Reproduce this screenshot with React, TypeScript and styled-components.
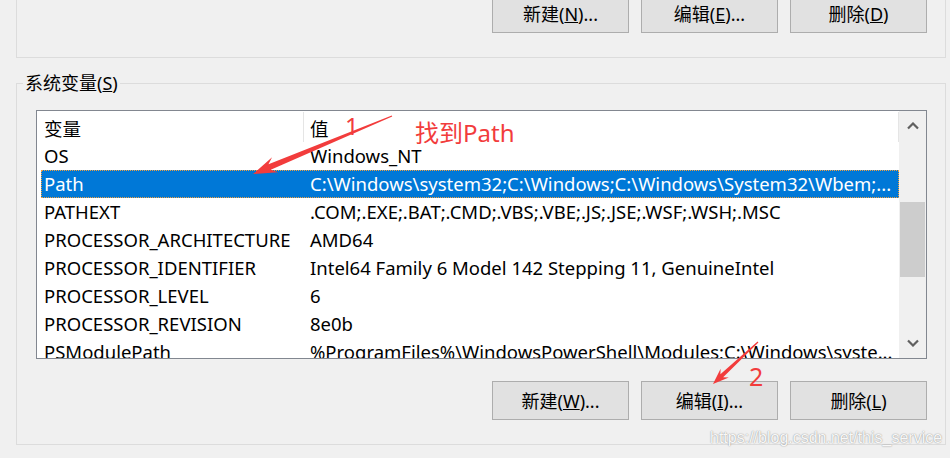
import React from 'react';
import styled, { createGlobalStyle } from 'styled-components';

const UI_FONT = `'Noto Sans', 'Noto Sans CJK SC', sans-serif`;
const MARK_RED = '#f23c3c';

const GlobalStyle = createGlobalStyle`
  html, body {
    margin: 0;
    padding: 0;
    background: #f0f0f0;
  }

  * {
    box-sizing: border-box;
  }
`;

const Page = styled.div`
  position: relative;
  width: 950px;
  height: 458px;
  overflow: hidden;
  display: flex;
  flex-direction: column;
  padding: 0 4px 0 16px;
  background: #f0f0f0;
  font-family: ${UI_FONT};
  font-size: 18px;
  color: #000;
`;

const TopGroup = styled.div`
  height: 58px;
  flex: none;
  display: flex;
  align-items: flex-end;
  justify-content: flex-end;
  padding: 0 18px 24px 0;
  border: 1px solid #dcdcdc;
  border-top: none;
`;

const ButtonRow = styled.div<{ $top?: number }>`
  display: flex;
  justify-content: flex-end;
  gap: 12px;
  margin-top: ${(p) => p.$top ?? 0}px;
`;

const DialogButton = styled.button`
  flex: none;
  width: 137px;
  height: 39px;
  padding: 0;
  background: #e1e1e1;
  border: 1px solid #adadad;
  font: inherit;
  line-height: 1;
  color: #000;
`;

const GroupBox = styled.fieldset`
  margin: 13px 0 0;
  padding: 0;
  min-width: 0;
  border: 1px solid #dcdcdc;
`;

const GroupTitle = styled.legend`
  margin-left: 6px;
  padding: 0 2px;
  line-height: 24px;
`;

const GroupBody = styled.div`
  display: flex;
  flex-direction: column;
  padding: 15px 18px 24px 19px;
`;

const ListBox = styled.div`
  display: flex;
  height: 249px;
  background: #fff;
  border: 1px solid #828790;
  font-size: 18.5px;
`;

const ListArea = styled.div`
  flex: 1;
  min-width: 0;
  overflow: hidden;
  padding-left: 4px;
`;

const HeaderRow = styled.div`
  display: grid;
  grid-template-columns: 263px 1fr;
  height: 31px;
  line-height: 33px;
`;

const HeaderCell = styled.div<{ $first?: boolean }>`
  padding-left: ${(p) => (p.$first ? 3 : 6)}px;
  border-right: 1px solid #e5e5e5;
  height: 30px;
  margin-top: 1px;
  white-space: nowrap;
`;

const Row = styled.div<{ $selected?: boolean }>`
  display: grid;
  grid-template-columns: 263px 1fr;
  height: 28px;
  line-height: 28px;
  background: ${(p) => (p.$selected ? '#0078d7' : 'transparent')};
  color: ${(p) => (p.$selected ? '#fff' : '#000')};
  outline: ${(p) => (p.$selected ? '1px dotted #f0a040' : 'none')};
  outline-offset: -1px;
`;

const Cell = styled.div<{ $first?: boolean }>`
  padding-left: ${(p) => (p.$first ? 3 : 6)}px;
  overflow: hidden;
  white-space: nowrap;
  text-overflow: clip;
`;

const ScrollBar = styled.div`
  flex: none;
  width: 27px;
  display: flex;
  flex-direction: column;
  background: #f0f0f0;
`;

const ScrollArrow = styled.div`
  height: 30px;
  display: flex;
  align-items: center;
  justify-content: center;
`;

const ScrollTrack = styled.div`
  flex: 1;
  padding: 0 1px;
`;

const ScrollThumb = styled.div`
  height: 75px;
  background: #cdcdcd;
`;

const Overlay = styled.svg`
  position: absolute;
  inset: 0;
  pointer-events: none;
`;

const Callout = styled.span<{ $x: number; $y: number; $size: number }>`
  position: absolute;
  left: ${(p) => p.$x}px;
  top: ${(p) => p.$y}px;
  font-size: ${(p) => p.$size}px;
  line-height: 1;
  color: ${MARK_RED};
  white-space: nowrap;
`;

const Watermark = styled.span`
  position: absolute;
  left: 710px;
  top: 429px;
  font-family: 'Liberation Sans', Arial, sans-serif;
  font-size: 16px;
  color: rgba(255, 255, 255, 0.95);
  text-shadow: 0 0 1px rgba(0, 0, 0, 0.35), 0 0 2px rgba(0, 0, 0, 0.2);
  white-space: nowrap;
`;

type Variable = { name: string; value: string };

const variables: Variable[] = [
  { name: 'OS', value: 'Windows_NT' },
  { name: 'Path', value: 'C:\\Windows\\system32;C:\\Windows;C:\\Windows\\System32\\Wbem;...' },
  { name: 'PATHEXT', value: '.COM;.EXE;.BAT;.CMD;.VBS;.VBE;.JS;.JSE;.WSF;.WSH;.MSC' },
  { name: 'PROCESSOR_ARCHITECTURE', value: 'AMD64' },
  { name: 'PROCESSOR_IDENTIFIER', value: 'Intel64 Family 6 Model 142 Stepping 11, GenuineIntel' },
  { name: 'PROCESSOR_LEVEL', value: '6' },
  { name: 'PROCESSOR_REVISION', value: '8e0b' },
  { name: 'PSModulePath', value: '%ProgramFiles%\\WindowsPowerShell\\Modules;C:\\Windows\\syste...' },
];

const Chevron = ({ down }: { down?: boolean }) => (
  <svg width="12" height="8" viewBox="0 0 12 8">
    <path
      d={down ? 'M1 1.5 L6 6.5 L11 1.5' : 'M1 6.5 L6 1.5 L11 6.5'}
      fill="none"
      stroke="#606060"
      strokeWidth="2.2"
    />
  </svg>
);

type ArrowProps = {
  from: [number, number];
  to: [number, number];
  head: number;
  barb: number;
  shaft: number;
};

// tapered hand-drawn style arrow, thin at the tail
const Arrow = ({ from, to, head, barb, shaft }: ArrowProps) => {
  const dx = to[0] - from[0];
  const dy = to[1] - from[1];
  const len = Math.hypot(dx, dy);
  const angle = (Math.atan2(dy, dx) * 180) / Math.PI;
  const pts = [
    [0, -0.6],
    [len - head * 0.75, -shaft],
    [len - head, -barb],
    [len, 0],
    [len - head, barb],
    [len - head * 0.75, shaft],
    [0, 0.6],
  ];
  return (
    <polygon
      points={pts.map((p) => p.join(',')).join(' ')}
      transform={`translate(${from[0]} ${from[1]}) rotate(${angle})`}
      fill={MARK_RED}
    />
  );
};

export default function App() {
  const selected = 'Path';
  const thumbOffset = 61;

  return (
    <Page>
      <GlobalStyle />
      <TopGroup>
        <ButtonRow>
          <DialogButton>新建(<u>N</u>)...</DialogButton>
          <DialogButton>编辑(<u>E</u>)...</DialogButton>
          <DialogButton>删除(<u>D</u>)</DialogButton>
        </ButtonRow>
      </TopGroup>

      <GroupBox>
        <GroupTitle>系统变量(<u>S</u>)</GroupTitle>
        <GroupBody>
          <ListBox>
            <ListArea>
              <HeaderRow>
                <HeaderCell $first>变量</HeaderCell>
                <HeaderCell>值</HeaderCell>
              </HeaderRow>
              {variables.map((v) => (
                <Row key={v.name} $selected={v.name === selected}>
                  <Cell $first>{v.name}</Cell>
                  <Cell>{v.value}</Cell>
                </Row>
              ))}
            </ListArea>
            <ScrollBar>
              <ScrollArrow>
                <Chevron />
              </ScrollArrow>
              <ScrollTrack>
                <ScrollThumb style={{ marginTop: thumbOffset }} />
              </ScrollTrack>
              <ScrollArrow>
                <Chevron down />
              </ScrollArrow>
            </ScrollBar>
          </ListBox>

          <ButtonRow $top={22}>
            <DialogButton>新建(<u>W</u>)...</DialogButton>
            <DialogButton>编辑(<u>I</u>)...</DialogButton>
            <DialogButton>删除(<u>L</u>)</DialogButton>
          </ButtonRow>
        </GroupBody>
      </GroupBox>

      <Overlay width="950" height="458">
        <Arrow from={[392, 116]} to={[253, 174]} head={24} barb={8} shaft={3} />
        <Arrow from={[758, 342]} to={[713, 384]} head={16} barb={6} shaft={2} />
      </Overlay>
      <Callout $x={345} $y={114} $size={24}>1</Callout>
      <Callout $x={415} $y={121} $size={24}>找到Path</Callout>
      <Callout $x={749} $y={364} $size={25}>2</Callout>
      <Watermark>https://blog.csdn.net/this_service</Watermark>
    </Page>
  );
}
